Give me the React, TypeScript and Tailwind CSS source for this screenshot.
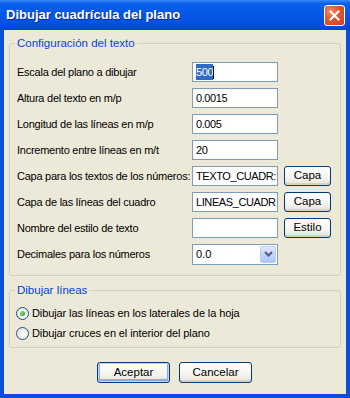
import React from 'react';

const font = "font-['Tahoma','Liberation_Sans',sans-serif]";

// Campo de texto estilo XP
function TextBox({ children }: { children?: React.ReactNode }) {
    return (
        <div className="w-[86px] h-[20px] shrink-0 border border-[#7F9DB9] bg-white pl-[3px] flex items-center overflow-hidden whitespace-nowrap text-[11px] tracking-[-0.4px] text-black">
            {children}
        </div>
    );
}

function XpButton({ label, width = 'w-[47px]', isDefault = false }: { label: string; width?: string; isDefault?: boolean }) {
    return (
        <button
            className={`${width} h-[20px] shrink-0 rounded-[3px] border border-[#003C74] bg-[linear-gradient(180deg,#FFFFFF_0%,#F5F4EF_60%,#E3E1D6_100%)] text-[11.5px] text-black flex items-center justify-center leading-none
                ${isDefault ? 'shadow-[inset_0_0_0_1px_#C3D5F8,inset_0_-1px_0_2px_#8DA9E6]' : 'shadow-[inset_0_-2px_0_#D6D0C5]'}`}
        >
            {label}
        </button>
    );
}

function Row({ label, children }: { label: string; children: React.ReactNode }) {
    return (
        <div className="flex items-center h-[20px]">
            <div className="w-[175px] shrink-0 overflow-hidden whitespace-nowrap text-[11px] tracking-[-0.25px] text-black">{label}</div>
            {children}
        </div>
    );
}

function Radio({ checked, label }: { checked?: boolean; label: string }) {
    return (
        <div className="flex items-center h-[14px] text-[11px] tracking-[-0.1px] text-black">
            <span className="w-[13px] h-[13px] rounded-full border border-[#1C5180] bg-[radial-gradient(circle_at_65%_65%,#FFFFFF_0%,#E8E8E0_70%,#D5D3C8_100%)] flex items-center justify-center mr-[3px]">
                {checked && <span className="w-[5px] h-[5px] rounded-full bg-[radial-gradient(circle_at_35%_35%,#7FE07F,#1F9A1F)]" />}
            </span>
            {label}
        </div>
    );
}

function GroupBox({ title, className, children }: { title: string; className: string; children: React.ReactNode }) {
    return (
        <div className={`relative ml-[5px] w-[332px] border border-[#D0D0BF] rounded-[3px] ${className}`}>
            <span className="absolute -top-[8px] left-[5px] px-[2px] bg-[#ECE9D8] text-[11.5px] leading-[14px] text-[#0046D5]">{title}</span>
            {children}
        </div>
    );
}

export default function App() {
    return (
        <div className={`${font} w-[350px] h-[398px] bg-[#0A4FDB] flex flex-col px-[4px] pb-[4px]`}>
            {/* Barra de título */}
            <div className="-mx-[4px] h-[30px] shrink-0 flex items-center justify-between pl-[6px] pr-[5px] bg-[linear-gradient(180deg,#3A8CF8_0%,#0A5FEA_12%,#0559E8_40%,#0452E2_75%,#0444CF_100%)]">
                <span className="font-['Liberation_Sans',sans-serif] font-bold text-[13px] text-white [text-shadow:1px_1px_#0B2A8C]">
                    Dibujar cuadrícula del plano
                </span>
                <div className="w-[21px] h-[21px] rounded-[3px] border border-white bg-[radial-gradient(circle_at_30%_30%,#F08A6A_0%,#E1552F_45%,#C7421E_100%)] flex items-center justify-center">
                    <svg width="11" height="11" viewBox="0 0 11 11">
                        <path d="M1.5 1.5 L9.5 9.5 M9.5 1.5 L1.5 9.5" stroke="white" strokeWidth="2" strokeLinecap="square" />
                    </svg>
                </div>
            </div>

            {/* Cuerpo del diálogo */}
            <div className="flex-1 bg-[#ECE9D8] flex flex-col">
                <GroupBox title="Configuración del texto" className="mt-[13px] h-[233px] pt-[18px] pl-[7px]">
                    <div className="flex flex-col gap-[6px]">
                        <Row label="Escala del plano a dibujar">
                            <TextBox>
                                <span className="bg-[#316AC5] text-white">500</span>
                                <span className="w-[1px] h-[13px] bg-black" />
                            </TextBox>
                        </Row>
                        <Row label="Altura del texto en m/p">
                            <TextBox>0.0015</TextBox>
                        </Row>
                        <Row label="Longitud de las líneas en m/p">
                            <TextBox>0.005</TextBox>
                        </Row>
                        <Row label="Incremento entre líneas en m/t">
                            <TextBox>20</TextBox>
                        </Row>
                        <Row label="Capa para los textos de los números:">
                            <TextBox>TEXTO_CUADR:</TextBox>
                            <div className="ml-[6px]"><XpButton label="Capa" /></div>
                        </Row>
                        <Row label="Capa de las líneas del cuadro">
                            <TextBox>LINEAS_CUADR</TextBox>
                            <div className="ml-[6px]"><XpButton label="Capa" /></div>
                        </Row>
                        <Row label="Nombre del estilo de texto">
                            <TextBox />
                            <div className="ml-[6px]"><XpButton label="Estilo" /></div>
                        </Row>
                        <Row label="Decimales para los números">
                            <div className="w-[86px] h-[21px] shrink-0 border border-[#7F9DB9] bg-white pl-[3px] flex items-center justify-between text-[11px] text-black">
                                <span>0.0</span>
                                <span className="w-[16px] h-[17px] mr-[1px] rounded-[2px] border border-[#B9CDF3] bg-[linear-gradient(180deg,#E1EAFE_0%,#C3D3FD_50%,#B1C5F8_100%)] flex items-center justify-center">
                                    <svg width="9" height="6" viewBox="0 0 9 6">
                                        <path d="M1 1 L4.5 4.5 L8 1" fill="none" stroke="#4D6185" strokeWidth="2" />
                                    </svg>
                                </span>
                            </div>
                        </Row>
                    </div>
                </GroupBox>

                <GroupBox title="Dibujar líneas" className="mt-[14px] h-[58px] pt-[15px] pl-[6px]">
                    <div className="flex flex-col gap-[6px]">
                        <Radio checked label="Dibujar las líneas en los laterales de la hoja" />
                        <Radio label="Dibujar cruces en el interior del plano" />
                    </div>
                </GroupBox>

                <div className="mt-[14px] flex pl-[93px] gap-[9px]">
                    <XpButton label="Aceptar" width="w-[73px] h-[21px]" isDefault />
                    <XpButton label="Cancelar" width="w-[73px] h-[21px]" />
                </div>
            </div>
        </div>
    );
}
